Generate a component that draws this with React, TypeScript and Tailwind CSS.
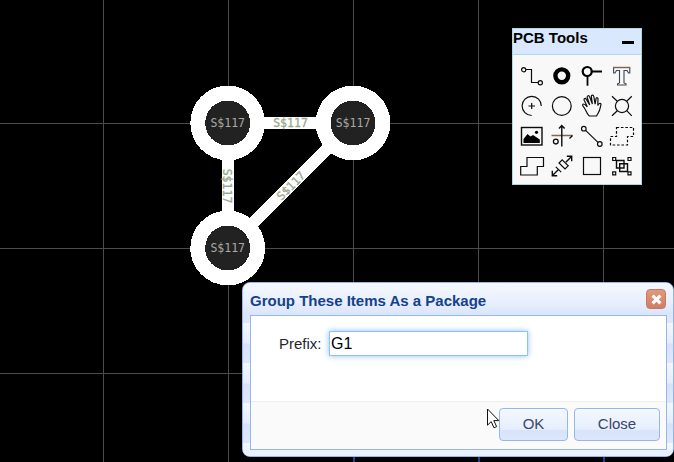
import type { ReactNode } from 'react';

const verticals = [103, 228, 353, 478, 603];
const horizontals = [123, 248, 373];
const pads = [
  { x: 227.7, y: 123 },
  { x: 353, y: 123 },
  { x: 227.7, y: 248 },
];

function Board() {
  return (
    <svg className="block h-[462px] w-[674px]" viewBox="0 0 674 462">
      <g fill="#4b4b4b" shapeRendering="crispEdges">
        {verticals.map((x) => (
          <rect key={x} x={x} y="0" width="1" height="462" />
        ))}
        {horizontals.map((y) => (
          <rect key={y} x="0" y={y} width="674" height="1" />
        ))}
        <g fill="#25408b">
          <rect x="353" y="457" width="2" height="5" />
          <rect x="478" y="457" width="2" height="5" />
          <rect x="603" y="457" width="2" height="5" />
        </g>
      </g>
      <path d="M228 248V123H353L228 248" fill="none" stroke="#fff" strokeWidth="12" shapeRendering="crispEdges" />
      {pads.map((p) => (
        <g key={`${p.x}-${p.y}`} shapeRendering="crispEdges">
          <circle cx={p.x} cy={p.y} r="37.4" fill="#fff" />
          <circle cx={p.x} cy={p.y} r="22.5" fill="#222" />
        </g>
      ))}
      <g className="font-['DejaVu_Sans_Mono',monospace] text-[11.5px]" textAnchor="middle" fill="#aaa9a2">
        {pads.map((p) => (
          <text key={`${p.x}-${p.y}`} x={p.x} y={p.y + 4.2}>S$117</text>
        ))}
        <g fill="#9aa88c" stroke="#9aa88c" strokeWidth=".3">
          <text x="290.5" y="127.2">S$117</text>
          <text transform="translate(223 186) rotate(90)">S$117</text>
          <text transform="translate(293.7 188.7) rotate(-45)">S$117</text>
        </g>
      </g>
    </svg>
  );
}

const tools: { name: string; art: ReactNode }[] = [
  {
    name: 'Track',
    art: (
      <>
        <circle cx="6.7" cy="8.7" r="2.1" />
        <path d="M9 8.5H14.5V21.5H21" />
        <circle cx="23.3" cy="21.7" r="2.1" />
      </>
    ),
  },
  { name: 'Pad', art: <circle cx="14.8" cy="14.8" r="6.4" stroke="#000" strokeWidth="4.4" /> },
  {
    name: 'Via',
    art: (
      <>
        <circle cx="10.2" cy="10.5" r="4.5" stroke="#000" strokeWidth="2.2" />
        <path d="M14.5 10.5H25M10.5 15V24.7" stroke="#000" strokeWidth="1.8" />
      </>
    ),
  },
  {
    name: 'Text',
    art: (
      <>
        <path d="M6.6 6.5V12H8L9.5 9.5H12.5V22L10.5 22.8V24H19V22.8L17 22V9.5H20L21.5 12H22.8V6.5" stroke="#3c4650" strokeWidth="1.1" />
        <path d="M6 6.5H23.2" stroke="#80634c" strokeWidth="1.4" />
      </>
    ),
  },
  {
    name: 'Arc',
    art: (
      <>
        <path d="M14.7 24.5A9.6 9.6 0 1 1 24.3 15" />
        <path d="M11.5 15H18M14.7 12V18" />
      </>
    ),
  },
  { name: 'Circle', art: <circle cx="14.8" cy="15" r="9.4" /> },
  {
    name: 'Move',
    art: (
      <path
        d="M11.5 24.2C9.5 22 9.3 20 7.5 17.2C6 15.5 5 14 6 13.2C7 12.4 8.5 14 10.3 15.8L7.2 9.3C6.5 7.4 8.5 6.7 9.4 8.5L12.7 14L10.2 6.5C9.9 4.5 12 4 12.7 6L15.4 13L14.3 5.6C14.3 3.7 16.5 3.8 16.8 5.5L18.1 13.2L19 7.6C19.5 6 21.3 6.6 21 8.3L20.8 14.5C21.3 12.5 23.9 11.5 24 13.5C23.3 15.5 23.2 19 21.2 22L19.5 25H12.3Z"
      />
    ),
  },
  {
    name: 'Hole',
    art: (
      <>
        <circle cx="15" cy="15" r="6.6" />
        <path d="M5 5.3L10.3 10.3M24.8 5.3L19.7 10.3M5 24.8L10.3 19.7M24.8 24.8L19.7 19.7" />
      </>
    ),
  },
  {
    name: 'Image',
    art: (
      <>
        <rect x="4.5" y="6.5" width="20.5" height="17.5" strokeWidth="1.4" />
        <path d="M6.5 22V18L10.5 13L13.5 15.5L16 14L22.8 18.5V22Z" fill="#000" stroke="none" />
        <circle cx="19.5" cy="11.3" r="1.6" fill="#000" stroke="none" />
      </>
    ),
  },
  {
    name: 'Canvas origin',
    art: (
      <>
        <path d="M4.5 14.5H25.5" stroke="#806652" strokeWidth="1.5" />
        <path d="M14.8 25.5V5M12 7.5L14.8 4.6L17.6 7.5M25.5 14.5L22.5 17.5" strokeWidth="1.4" />
        <circle cx="8.8" cy="20.6" r="2.4" strokeWidth="1.3" />
      </>
    ),
  },
  {
    name: 'Dimension line',
    art: (
      <>
        <circle cx="6.8" cy="7.7" r="2.3" />
        <path d="M8.6 9.4L21 21.4" />
        <circle cx="22.8" cy="23" r="2.3" />
      </>
    ),
  },
  {
    name: 'Cutout',
    art: <path d="M9.5 6.5H26.5V15.5H20.5V24H3.5V15.5H9.5Z" strokeDasharray="2.6 1.8" />,
  },
  { name: 'Copper area', art: <path d="M10 6.5H26.5V15.5H20.3V24H3.7V15.5H10Z" /> },
  {
    name: 'Measure',
    art: (
      <>
        <path d="M5.5 24.5L11.5 18.5M18.8 11.2L24.5 5.5M5.3 19.8V24.7H10.2M19.8 5.3H24.7V10.2" strokeWidth="1.4" />
        <path d="M8.8 15.8L14.2 21.2M15.2 8.8L21.2 14.8L18 18L12 12Z" />
      </>
    ),
  },
  { name: 'Rectangle', art: <rect x="6.5" y="6.5" width="17" height="17" /> },
  {
    name: 'Group',
    art: (
      <>
        <path d="M9.5 9.5H17V17H9.5ZM12.7 12.7H20.5V20.5H12.7Z" strokeWidth="1.4" />
        <path d="M5.7 6.5H8.7V9.5H5.7ZM21 6.5H24V9.5H21ZM5.7 20.8H8.7V23.8H5.7ZM21 20.8H24V23.8H21Z" />
      </>
    ),
  },
];

function ToolPanel() {
  return (
    <section className="absolute left-[512px] top-[28px] h-[157px] w-[130px] border border-[#add8e6] bg-[#f8f8f8]">
      <header className="flex h-[26px] items-start justify-between border-b border-[#add8e6] bg-[#d9e8fd] pr-[7px]">
        <h2 className="text-[15px] font-bold leading-[18px] text-black">PCB Tools</h2>
        <span className="mt-3 h-[3px] w-3 bg-black" />
      </header>
      <div className="grid w-[124px] grid-cols-[repeat(4,30px)] pl-1 pt-[6px]">
        {tools.map((tool) => (
          <button key={tool.name} aria-label={tool.name} className="size-[30px]">
            <svg className="block size-[30px]" viewBox="0 0 30 30" fill="none" stroke="#0c0c0c" strokeWidth="1.2">
              {tool.art}
            </svg>
          </button>
        ))}
      </div>
    </section>
  );
}

function DialogButton({ children, className }: { children: ReactNode; className: string }) {
  return (
    <button
      className={`h-[33px] rounded-[4px] border border-[#95b8e7] bg-[linear-gradient(#f4f8ff,#e6eefd_66%,#d7e3fb_67%,#dce7fc)] text-[15px] text-[#3b4569] ${className}`}
    >
      {children}
    </button>
  );
}

function PackageDialog() {
  return (
    <section className="absolute left-[242px] top-[282px] flex h-[175px] w-[432px] flex-col rounded-[8px] border border-[#95b8e7] bg-[repeating-linear-gradient(#f3f7ff_0,#e5edfd_20px,#d7e2fb_21px,#dee7fc_40px)] pl-[7px] pr-[6px]">
      <header className="-ml-[7px] -mr-[6px] flex h-8 shrink-0 items-start justify-between rounded-t-[7px] bg-[linear-gradient(#f4f8ff,#e8effd_60%,#d9e5fc)] pl-[7px] pr-[7px]">
        <h1 className="pt-2 text-[15px] font-bold leading-[20px] text-[#15428b]">Group These Items As a Package</h1>
        <button aria-label="Close dialog" className="mt-[6px] flex size-5 items-center justify-center rounded-[4px] border border-[#c4776a] bg-[linear-gradient(#e29a78,#cf7e64)]">
          <svg className="size-[11px]" viewBox="0 0 12 12" fill="none" stroke="#fff" strokeWidth="3.4">
            <path d="M1.7 1.7L10.3 10.3M10.3 1.7L1.7 10.3" />
          </svg>
        </button>
      </header>
      <div className="flex h-[135px] flex-col border border-[#95b8e7] bg-white">
        <div className="flex h-[85px] items-start pl-7 pt-[15px]">
          <label htmlFor="prefix" className="w-[50px] whitespace-nowrap text-[15px] leading-[25px] text-[#1e2430]">Prefix:</label>
          <input
            id="prefix"
            defaultValue="G1"
            className="h-[25px] w-[199px] border border-[#8ec3eb] bg-white pl-px text-[16px] leading-[22px] text-black shadow-[0_0_6px_#8fc0ee] outline-none"
          />
        </div>
        <footer className="flex flex-1 justify-end gap-[6px] border-t border-[#eee] bg-[#fafafa] pr-[6px] pt-[6px]">
          <DialogButton className="w-[69px]">OK</DialogButton>
          <DialogButton className="w-[86px]">Close</DialogButton>
        </footer>
      </div>
      <div className="-ml-[7px] -mr-[6px] flex-1 rounded-b-[7px] bg-[#e8f0fd]" />
    </section>
  );
}

export default function App() {
  return (
    <main className="relative h-[462px] w-[674px] overflow-hidden bg-black font-['Liberation_Sans',Arial,sans-serif]">
      <Board />
      <ToolPanel />
      <PackageDialog />
      <svg className="absolute left-[487px] top-[408px] h-[21px] w-[13px]" viewBox="0 0 13 21">
        <path d="M.5 1V17.2L4.2 13.6L7 19.8L9.6 18.6L6.8 12.6H11.8Z" fill="#fff" stroke="#111" />
      </svg>
    </main>
  );
}
